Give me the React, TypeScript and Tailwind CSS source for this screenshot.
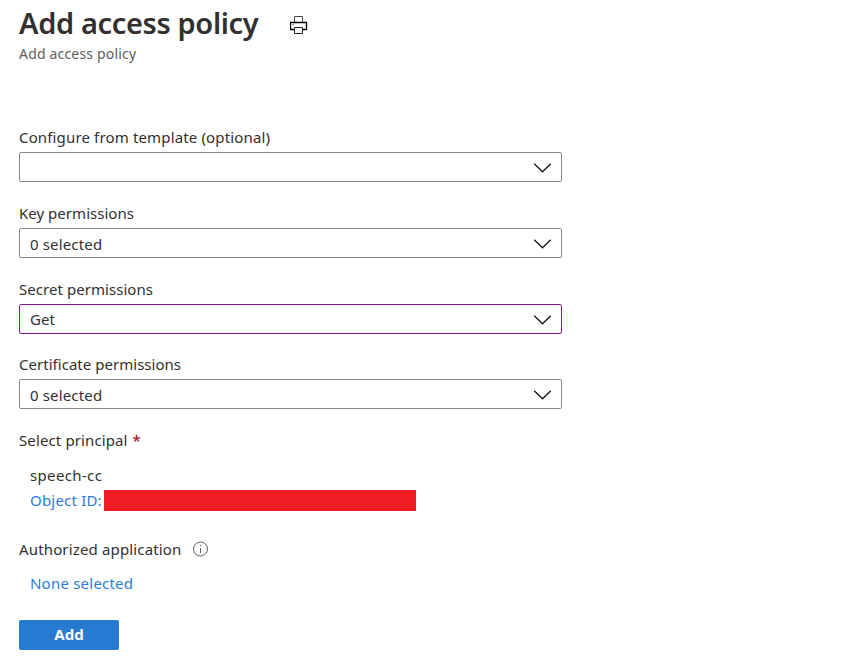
import type { ReactNode } from "react";

function Chevron() {
  return (
    <svg width="19" height="12" viewBox="0 0 19 12" fill="none" stroke="#1b1a19" strokeWidth="1.4">
      <path d="M1.2 2.8 9.5 10.8 17.8 2.8" />
    </svg>
  );
}

function PrinterIcon() {
  return (
    <svg width="18" height="18" viewBox="0 0 18 18" fill="none">
      <path d="M4.5 6V.5h8V6" stroke="#4a4a4a" />
      <path d="M4.5 13.5h-4v-7h16v7h-4" stroke="#000" strokeWidth="1.3" />
      <path d="M4.5 11.5h8v6h-8z" stroke="#222" />
      <path d="M2.5 8.5h1" stroke="#333" />
    </svg>
  );
}

function InfoIcon() {
  return (
    <svg width="16" height="16" viewBox="0 0 16 16" fill="none" stroke="#605e5c">
      <circle cx="7.5" cy="8" r="7" />
      <path d="M7.5 7v5M7.5 4.2v1.2" />
    </svg>
  );
}

function Label({ children, className }: { children: ReactNode; className: string }) {
  return <label className={`flex h-[30px] items-center ${className}`}>{children}</label>;
}

function Select({ value = "", active = false }: { value?: string; active?: boolean }) {
  return (
    <div
      className={`flex h-[30px] w-[543px] items-center justify-between rounded-[2px] border pr-[9px] pl-[10px] ${
        active ? "border-[#881798]" : "border-[#8a8886]"
      }`}
    >
      <span className={active ? "tracking-[0.1px]" : "pt-[2px] tracking-[0.15px]"}>{value}</span>
      <Chevron />
    </div>
  );
}

export default function App() {
  return (
    <main className="h-[665px] w-full overflow-hidden bg-white pl-[19px] font-['Noto_Sans',sans-serif] text-[15px] leading-[22px] whitespace-nowrap text-[#323130]">
      <header className="h-[122px] pt-[5px]">
        <div className="flex h-9 items-center">
          <h1 className="w-[271px] text-[29px] leading-9 font-semibold tracking-[-0.36px]">Add access policy</h1>
          <span className="pt-[3px]">
            <PrinterIcon />
          </span>
        </div>
        <p className="pt-[3px] text-[14px] leading-5 tracking-[0.18px] text-[#605e5c]">Add access policy</p>
      </header>

      <Label className="tracking-[0.15px]">Configure from template (optional)</Label>
      <Select />
      <Label className="mt-4 tracking-[0.03px]">Key permissions</Label>
      <Select value="0 selected" />
      <Label className="mt-4 tracking-[0.05px]">Secret permissions</Label>
      <Select value="Get" active />
      <Label className="mt-[15px] tracking-[0.03px]">Certificate permissions</Label>
      <Select value="0 selected" />

      <Label className="mt-4 tracking-[0.12px]">
        Select principal<span className="ml-[5px] font-semibold text-[#a4262c]">*</span>
      </Label>
      <div className="mt-[9px] pl-[11px]">
        <div className="h-[26px] leading-[22px] tracking-[0.35px]">speech-cc</div>
        <div className="flex h-[21px] items-center text-[#2b7cd3]">
          <span className="w-[74px] pb-[2px] tracking-[0.2px]">Object ID:</span>
          <span className="h-[21px] w-[312px] bg-[#ef1c24]" />
        </div>
      </div>

      <Label className="mt-[23px] tracking-[0.15px]">
        <span className="w-[174px]">Authorized application</span>
        <InfoIcon />
      </Label>
      <a className="mt-[8px] block h-6 pl-[11px] leading-[22px] tracking-[0.22px] text-[#2b7cd3]">None selected</a>
      <button className="mt-[24px] flex h-[30px] w-[100px] items-center justify-center rounded-[2px] bg-[#267ad2] pb-[2px] font-bold tracking-[0.1px] text-white">
        Add
      </button>
    </main>
  );
}
